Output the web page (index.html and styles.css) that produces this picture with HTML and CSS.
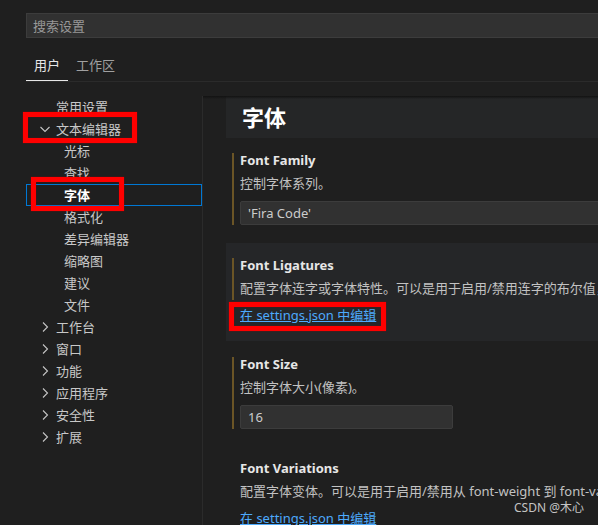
FILE: index.html
```html
<!DOCTYPE html>
<html lang="zh-CN">
<head>
<meta charset="utf-8">
<title>设置</title>
<link rel="stylesheet" href="styles.css">
</head>
<body>
<div class="page">
  <div class="top">
    <div class="search"><span class="placeholder">搜索设置</span></div>
    <div class="tabs">
      <div class="tab active">用户</div>
      <div class="tab">工作区</div>
    </div>
  </div>
  <div class="main">
    <nav class="tree">
      <div class="row l1"><span class="twist"></span><span>常用设置</span></div>
      <div class="row l1"><span class="twist"><svg viewBox="0 0 16 16" width="16" height="16"><polyline points="3.5,6 8,10.5 12.5,6" /></svg></span><span>文本编辑器</span></div>
      <div class="row l2">光标</div>
      <div class="row l2">查找</div>
      <div class="row l2 selected">字体</div>
      <div class="row l2">格式化</div>
      <div class="row l2">差异编辑器</div>
      <div class="row l2">缩略图</div>
      <div class="row l2">建议</div>
      <div class="row l2">文件</div>
      <div class="row l1"><span class="twist"><svg viewBox="0 0 16 16" width="16" height="16"><polyline points="6,3.5 10.5,8 6,12.5" /></svg></span><span>工作台</span></div>
      <div class="row l1"><span class="twist"><svg viewBox="0 0 16 16" width="16" height="16"><polyline points="6,3.5 10.5,8 6,12.5" /></svg></span><span>窗口</span></div>
      <div class="row l1"><span class="twist"><svg viewBox="0 0 16 16" width="16" height="16"><polyline points="6,3.5 10.5,8 6,12.5" /></svg></span><span>功能</span></div>
      <div class="row l1"><span class="twist"><svg viewBox="0 0 16 16" width="16" height="16"><polyline points="6,3.5 10.5,8 6,12.5" /></svg></span><span>应用程序</span></div>
      <div class="row l1"><span class="twist"><svg viewBox="0 0 16 16" width="16" height="16"><polyline points="6,3.5 10.5,8 6,12.5" /></svg></span><span>安全性</span></div>
      <div class="row l1"><span class="twist"><svg viewBox="0 0 16 16" width="16" height="16"><polyline points="6,3.5 10.5,8 6,12.5" /></svg></span><span>扩展</span></div>
    </nav>
    <section class="content">
      <div class="header">字体</div>
      <div class="item first">
        <div class="body mod">
          <div class="title">Font Family</div>
          <div class="desc">控制字体系列。</div>
          <div class="input wide">'Fira Code'</div>
        </div>
      </div>
      <div class="item hover">
        <div class="body mod pad">
          <div class="title">Font Ligatures</div>
          <div class="desc">配置字体连字或字体特性。可以是用于启用/禁用连字的布尔值，或者是用于设置 CSS "font-feature-settings" 属性值的字符串。</div>
        </div>
        <div class="body plain">
          <a class="link near" href="#">在 settings.json 中编辑</a>
        </div>
      </div>
      <div class="item">
        <div class="body mod">
          <div class="title">Font Size</div>
          <div class="desc">控制字体大小(像素)。</div>
          <div class="input num">16</div>
        </div>
      </div>
      <div class="item">
        <div class="body plain">
          <div class="title">Font Variations</div>
          <div class="desc">配置字体变体。可以是用于启用/禁用从 font-weight 到 font-variation-settings 的转换的布尔值，或者是 CSS "font-variation-settings" 属性值的字符串。</div>
          <a class="link" href="#">在 settings.json 中编辑</a>
        </div>
      </div>
    </section>
  </div>
  <div class="mark mark-editor"></div>
  <div class="mark mark-font"></div>
  <div class="mark mark-link"></div>
  <div class="watermark">CSDN @木心</div>
</div>
</body>
</html>
```

FILE: styles.css
```css
* {
  box-sizing: border-box;
  margin: 0;
  padding: 0;
}

html,
body {
  background: #1f1f1f;
}

body {
  width: 598px;
  height: 525px;
  overflow: hidden;
  font-family: "Noto Sans", "Noto Sans CJK SC", sans-serif;
  font-size: 13px;
  color: #cccccc;
}

.page {
  position: relative;
  width: 598px;
  height: 525px;
  overflow: hidden;
}

.top {
  padding: 13px 0 0 26px;
}

.search {
  height: 25px;
  width: 620px;
  background: #313131;
  border: 1px solid #3c3c3c;
  display: flex;
  align-items: center;
  padding-left: 6px;
}

.placeholder {
  color: #989898;
}

.tabs {
  margin-top: 12px;
  display: flex;
  border-bottom: 1px solid #2b2b2b;
}

.tab {
  height: 31px;
  line-height: 30px;
  padding: 0 8px;
  color: #a0a0a0;
  border-bottom: 1px solid transparent;
}

.tab.active {
  color: #e7e7e7;
  border-bottom-color: #e7e7e7;
}

.main {
  margin-top: 14px;
  display: flex;
  height: 429px;
}

.tree {
  width: 202px;
  flex: none;
  padding-left: 26px;
}

.row {
  height: 22px;
  line-height: 22px;
  display: flex;
  align-items: center;
  color: #c8c8c8;
  white-space: nowrap;
}

.row.l1 {
  padding-left: 11px;
}

.row.l2 {
  padding-left: 38px;
}

.twist {
  width: 16px;
  height: 16px;
  margin-right: 3px;
  display: flex;
}

.twist svg {
  fill: none;
  stroke: #c5c5c5;
  stroke-width: 1.1;
}

.row.selected {
  color: #ffffff;
  font-weight: 700;
  box-shadow: inset 0 0 0 1px #0078d4;
}

.content {
  position: relative;
  flex: 1;
  min-width: 0;
  border-left: 1px solid #2b2b2b;
  padding-left: 23px;
  overflow: hidden;
}

.content::before {
  content: "";
  position: absolute;
  left: 0;
  right: 0;
  top: 0;
  height: 3px;
  background: linear-gradient(#121212, rgba(18, 18, 18, 0));
  z-index: 2;
}

.header {
  height: 42px;
  line-height: 42px;
  background: #252627;
  padding-left: 16px;
  font-size: 22px;
  font-weight: 700;
  color: #ffffff;
}

.item {
  padding: 16px 0 16px 6px;
}

.item.first {
  padding-top: 15px;
  padding-bottom: 18px;
}

.item.hover {
  background: #252628;
  padding-top: 15px;
  padding-bottom: 17px;
}

.body {
  padding-left: 6px;
  border-left: 2px solid transparent;
}

.body.mod {
  border-left-color: #6b5526;
}

.body.pad {
  padding-bottom: 3px;
}

.title {
  font-weight: 700;
  line-height: 14px;
  color: #e7e7e7;
  white-space: nowrap;
}

.desc {
  margin-top: 7px;
  line-height: 18px;
  white-space: nowrap;
  color: #c2c2c2;
}

.input {
  margin-top: 9px;
  height: 24px;
  line-height: 22px;
  background: #313131;
  border: 1px solid #3c3c3c;
  border-radius: 2px;
  padding-left: 7px;
  color: #cccccc;
  white-space: nowrap;
}

.input.wide {
  width: 500px;
}

.input.num {
  width: 213px;
}

.link {
  display: inline-block;
  margin-top: 9px;
  line-height: 18px;
  color: #4daafc;
  text-decoration: underline;
  white-space: nowrap;
}

.link.near {
  margin-top: 6px;
}

.mark {
  position: absolute;
  border: 5px solid #ff0000;
  box-shadow: 0 0 1px #b00000, inset 0 0 1px #b00000;
}

.mark-editor {
  left: 23px;
  top: 112px;
  width: 114px;
  height: 31px;
}

.mark-font {
  left: 31px;
  top: 177px;
  width: 93px;
  height: 34px;
}

.mark-link {
  left: 229px;
  top: 302px;
  width: 157px;
  height: 29px;
}

.watermark {
  position: absolute;
  left: 514px;
  top: 500px;
  font-size: 12px;
  line-height: 16px;
  color: #c4c4c4;
  white-space: nowrap;
}
```
